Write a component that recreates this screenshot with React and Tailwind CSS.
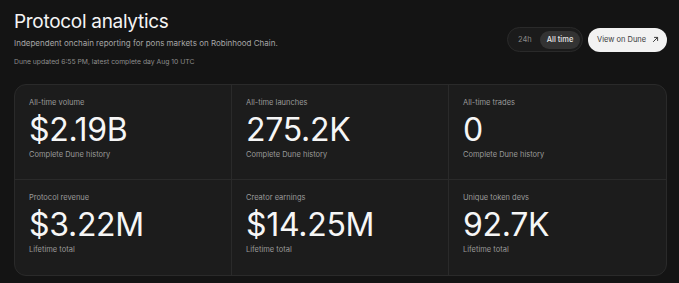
const stats = [
  { label: 'All-time volume', value: '$2.19B', note: 'Complete Dune history' },
  { label: 'All-time launches', value: '275.2K', note: 'Complete Dune history' },
  { label: 'All-time trades', value: '0', note: 'Complete Dune history' },
  { label: 'Protocol revenue', value: '$3.22M', note: 'Lifetime total' },
  { label: 'Creator earnings', value: '$14.25M', note: 'Lifetime total' },
  { label: 'Unique token devs', value: '92.7K', note: 'Lifetime total' },
]

function ArrowUpRight() {
  return (
    <svg width="7" height="7" viewBox="0 0 10 10" fill="none" stroke="currentColor" strokeWidth="1.4" strokeLinecap="round" strokeLinejoin="round">
      <path d="M2 8 L8 2" />
      <path d="M3.5 2 H8 V6.5" />
    </svg>
  )
}

function App() {
  return (
    <div className="min-h-screen bg-[#141414] text-[#f2f2f2] pl-[14px] pr-[12px] pt-[10px] font-['Inter',sans-serif]">
      {/* Header */}
      <div className="flex items-start justify-between">
        <div>
          <h1 className="text-[19px] leading-[23px] tracking-[-0.3px] text-[#f4f4f4]">Protocol analytics</h1>
          <p className="mt-[4px] text-[8px] leading-[12px] text-[#a6a6a6]">
            Independent onchain reporting for pons markets on Robinhood Chain.
          </p>
          <p className="mt-[8px] text-[6.8px] leading-[10px] text-[#8c8c8c]">
            Dune updated 6:55 PM, latest complete day Aug 10 UTC
          </p>
        </div>

        <div className="mt-[17px] flex items-center gap-[5px]">
          <div className="flex items-center h-[25px] w-[76px] rounded-full bg-[#1b1b1b] border border-[#2a2a2a] pl-[10px] pr-[2px]">
            <span className="text-[7.5px] text-[#8a8a8a]">24h</span>
            <span className="ml-auto flex items-center justify-center h-[18px] w-[40px] rounded-full bg-[#333333] text-[7.5px] font-medium text-[#e8e8e8]">
              All time
            </span>
          </div>
          <button className="flex items-center h-[24px] w-[79px] rounded-full bg-[#f2f2f2] pl-[9px] gap-[6px] text-[7.5px] text-[#3a3a3a]">
            View on Dune
            <ArrowUpRight />
          </button>
        </div>
      </div>

      {/* Stats card */}
      <div className="mt-[17px] grid grid-cols-3 rounded-[12px] border border-[#2a2a2a] bg-[#1c1c1c] overflow-hidden">
        {stats.map((s, i) => (
          <div
            key={s.label}
            className={`h-[95px] px-[14px] pt-[13px] ${i % 3 !== 2 ? 'border-r border-[#2a2a2a]' : ''} ${i < 3 ? 'border-b border-[#2a2a2a]' : ''}`}
          >
            <div className="text-[7.5px] leading-[10px] text-[#9a9a9a]">{s.label}</div>
            <div className="mt-[6px] text-[32px] leading-[32px] tracking-[-0.3px] text-[#f6f6f6]">{s.value}</div>
            <div className="mt-[4px] text-[7.5px] leading-[10px] text-[#9a9a9a]">{s.note}</div>
          </div>
        ))}
      </div>
    </div>
  )
}

export default App
